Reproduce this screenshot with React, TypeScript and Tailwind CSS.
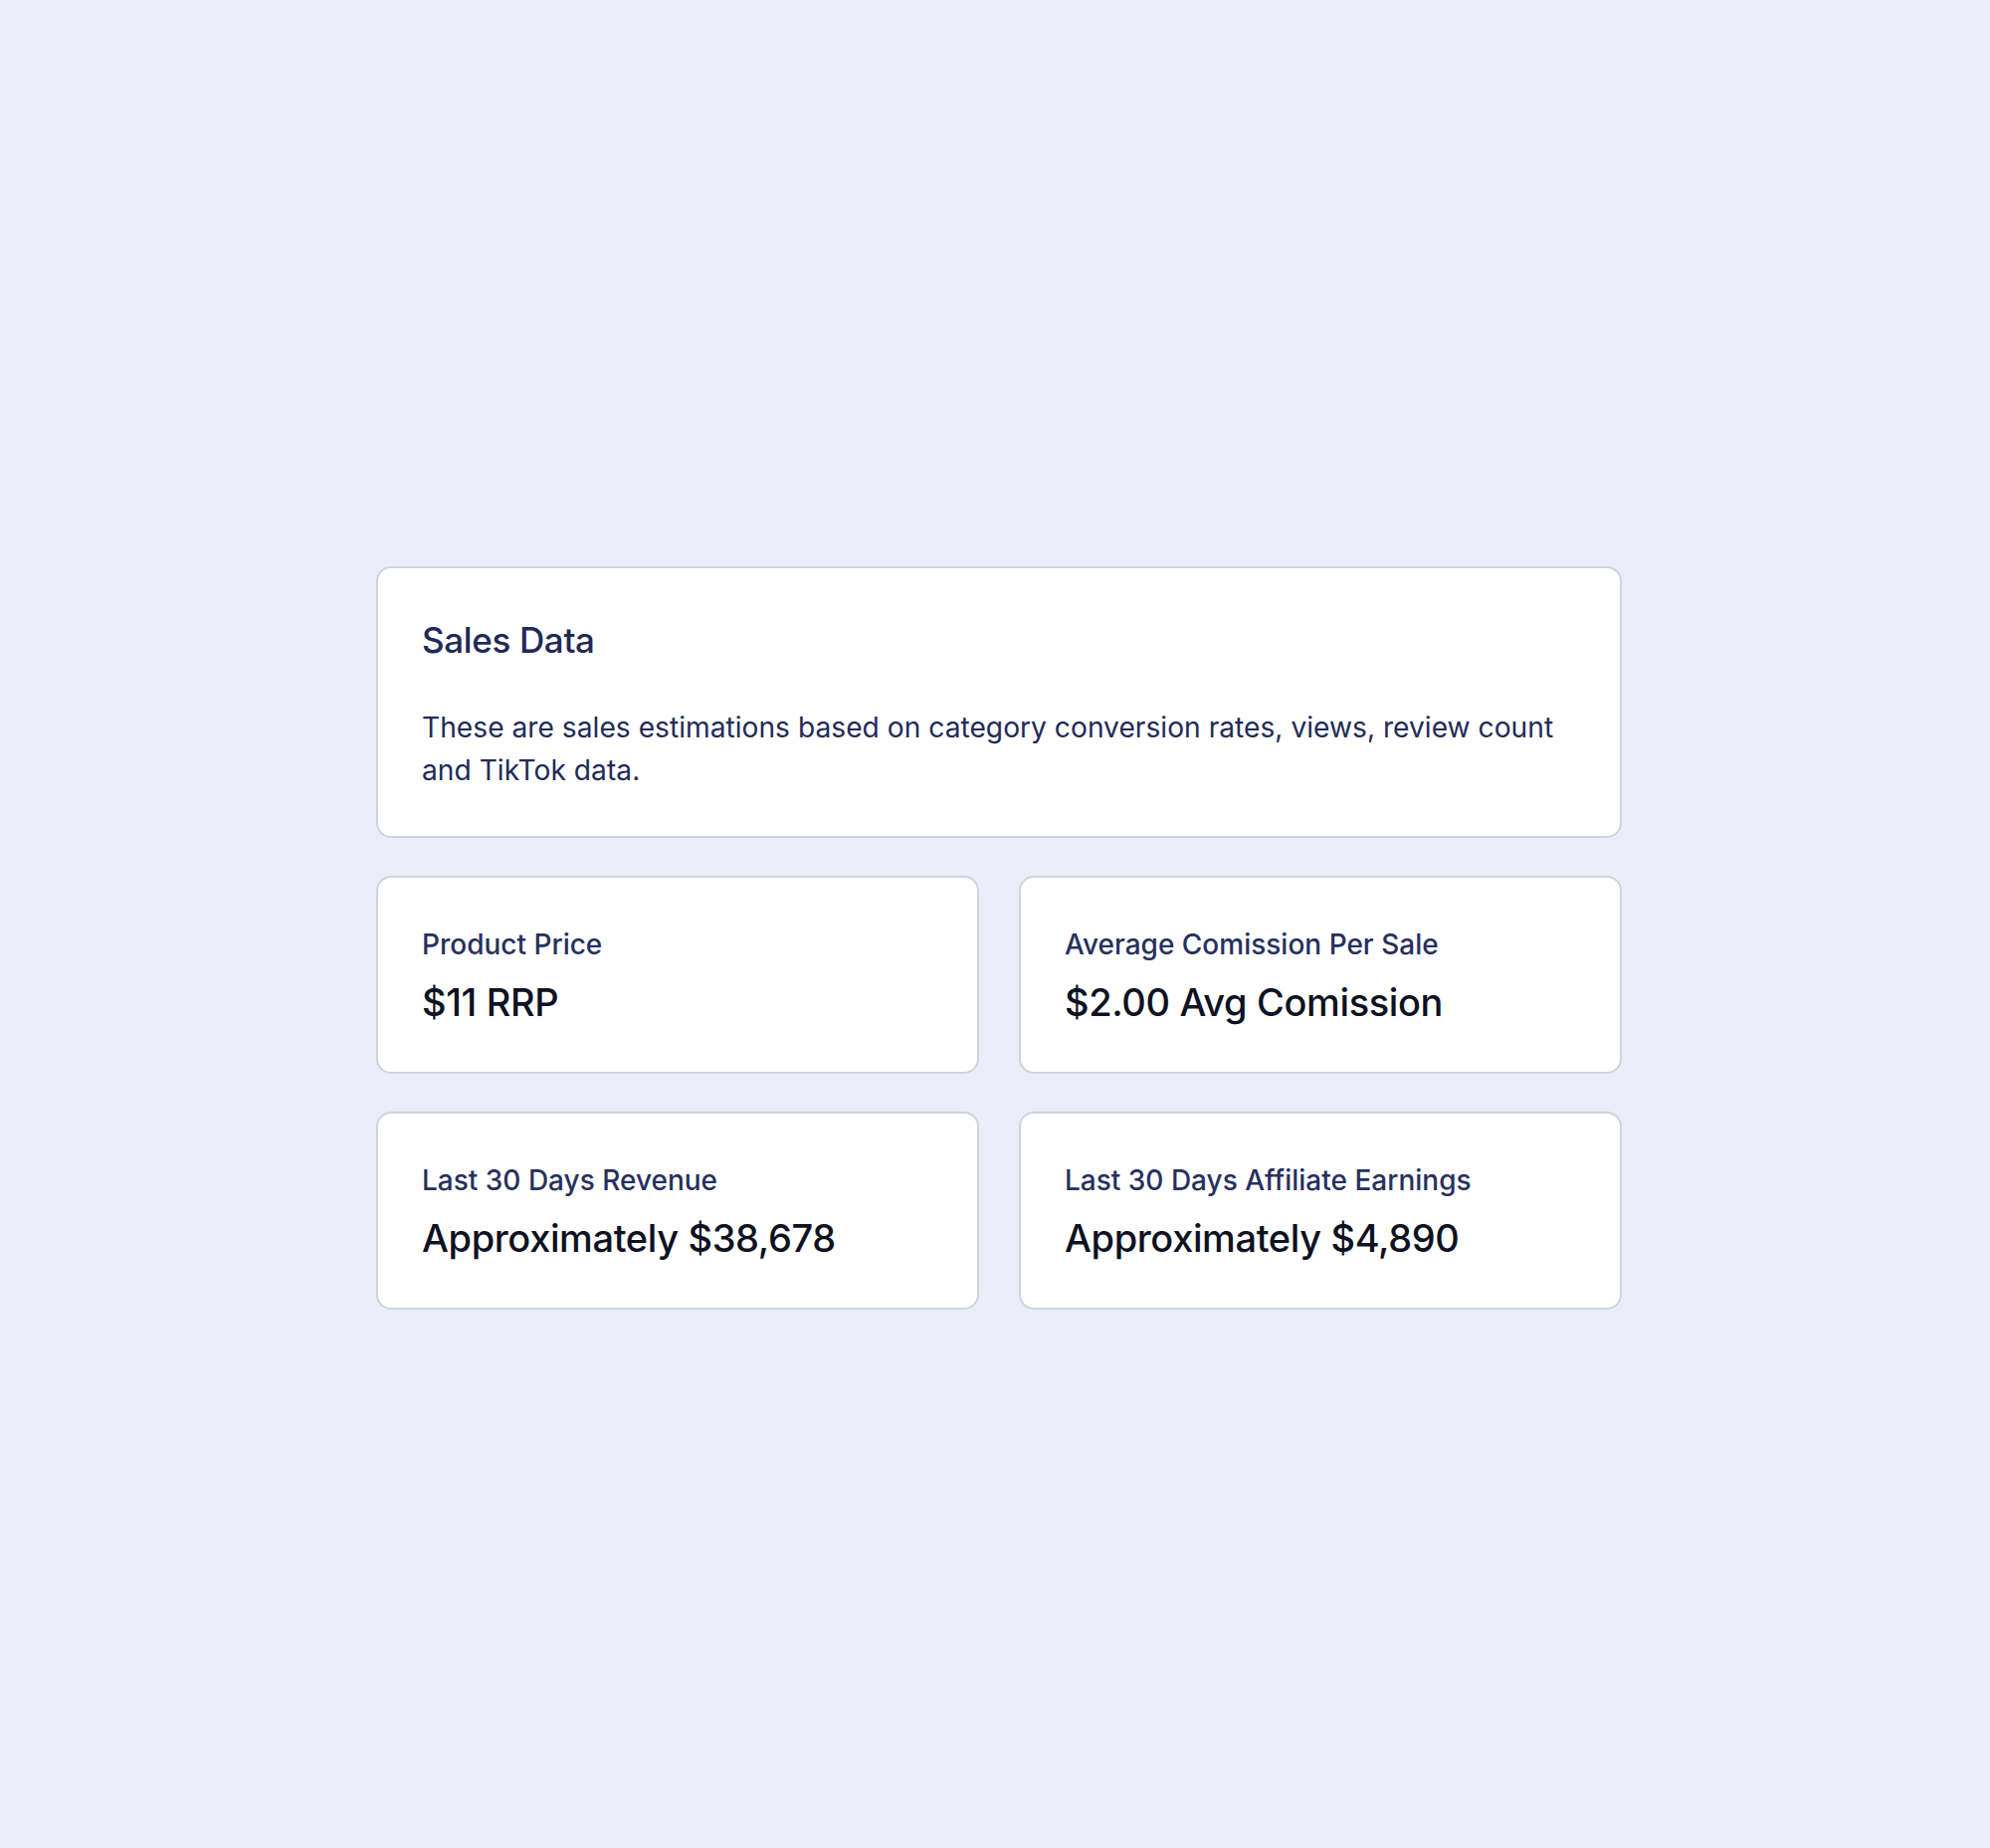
const stats = [
  { label: 'Product Price', value: '$11 RRP' },
  { label: 'Average Comission Per Sale', value: '$2.00 Avg Comission' },
  { label: 'Last 30 Days Revenue', value: 'Approximately $38,678' },
  { label: 'Last 30 Days Affiliate Earnings', value: 'Approximately $4,890' },
];

const StatCard = ({ label, value }: { label: string; value: string }) => (
  <div className="bg-white border-2 border-[#cfd3de] rounded-[15px] px-[44px] pt-[49px] pb-[47px]">
    <p className="text-[28px] leading-[36px] font-medium text-[#27305e]">{label}</p>
    <p className="mt-[17px] text-[38px] leading-[46px] font-medium text-[#0e1222] tracking-[-0.01em]">{value}</p>
  </div>
);

const App = () => {
  return (
    <div
      className="w-full h-[1857px] bg-[#ebeef8] flex items-center justify-center pt-[27px] pl-[8px]"
      style={{ fontFamily: 'Inter, "Noto Sans", sans-serif' }}
    >
      <div className="w-[1252px] flex flex-col gap-[38px]">
        {/* Sales Data */}
        <div className="bg-white border-2 border-[#cfd3de] rounded-[15px] px-[44px] pt-[52px] pb-[44px]">
          <h2 className="text-[35px] leading-[40px] font-medium text-[#1f2a57] tracking-[-0.01em]">Sales Data</h2>
          <p className="mt-[47px] text-[28.2px] leading-[43px] text-[#222b58]">
            These are sales estimations based on category conversion rates, views, review count and TikTok data.
          </p>
        </div>

        <div className="grid grid-cols-2 gap-x-[40px] gap-y-[38px]">
          {stats.map((s) => (
            <StatCard key={s.label} label={s.label} value={s.value} />
          ))}
        </div>
      </div>
    </div>
  );
};

export default App;
